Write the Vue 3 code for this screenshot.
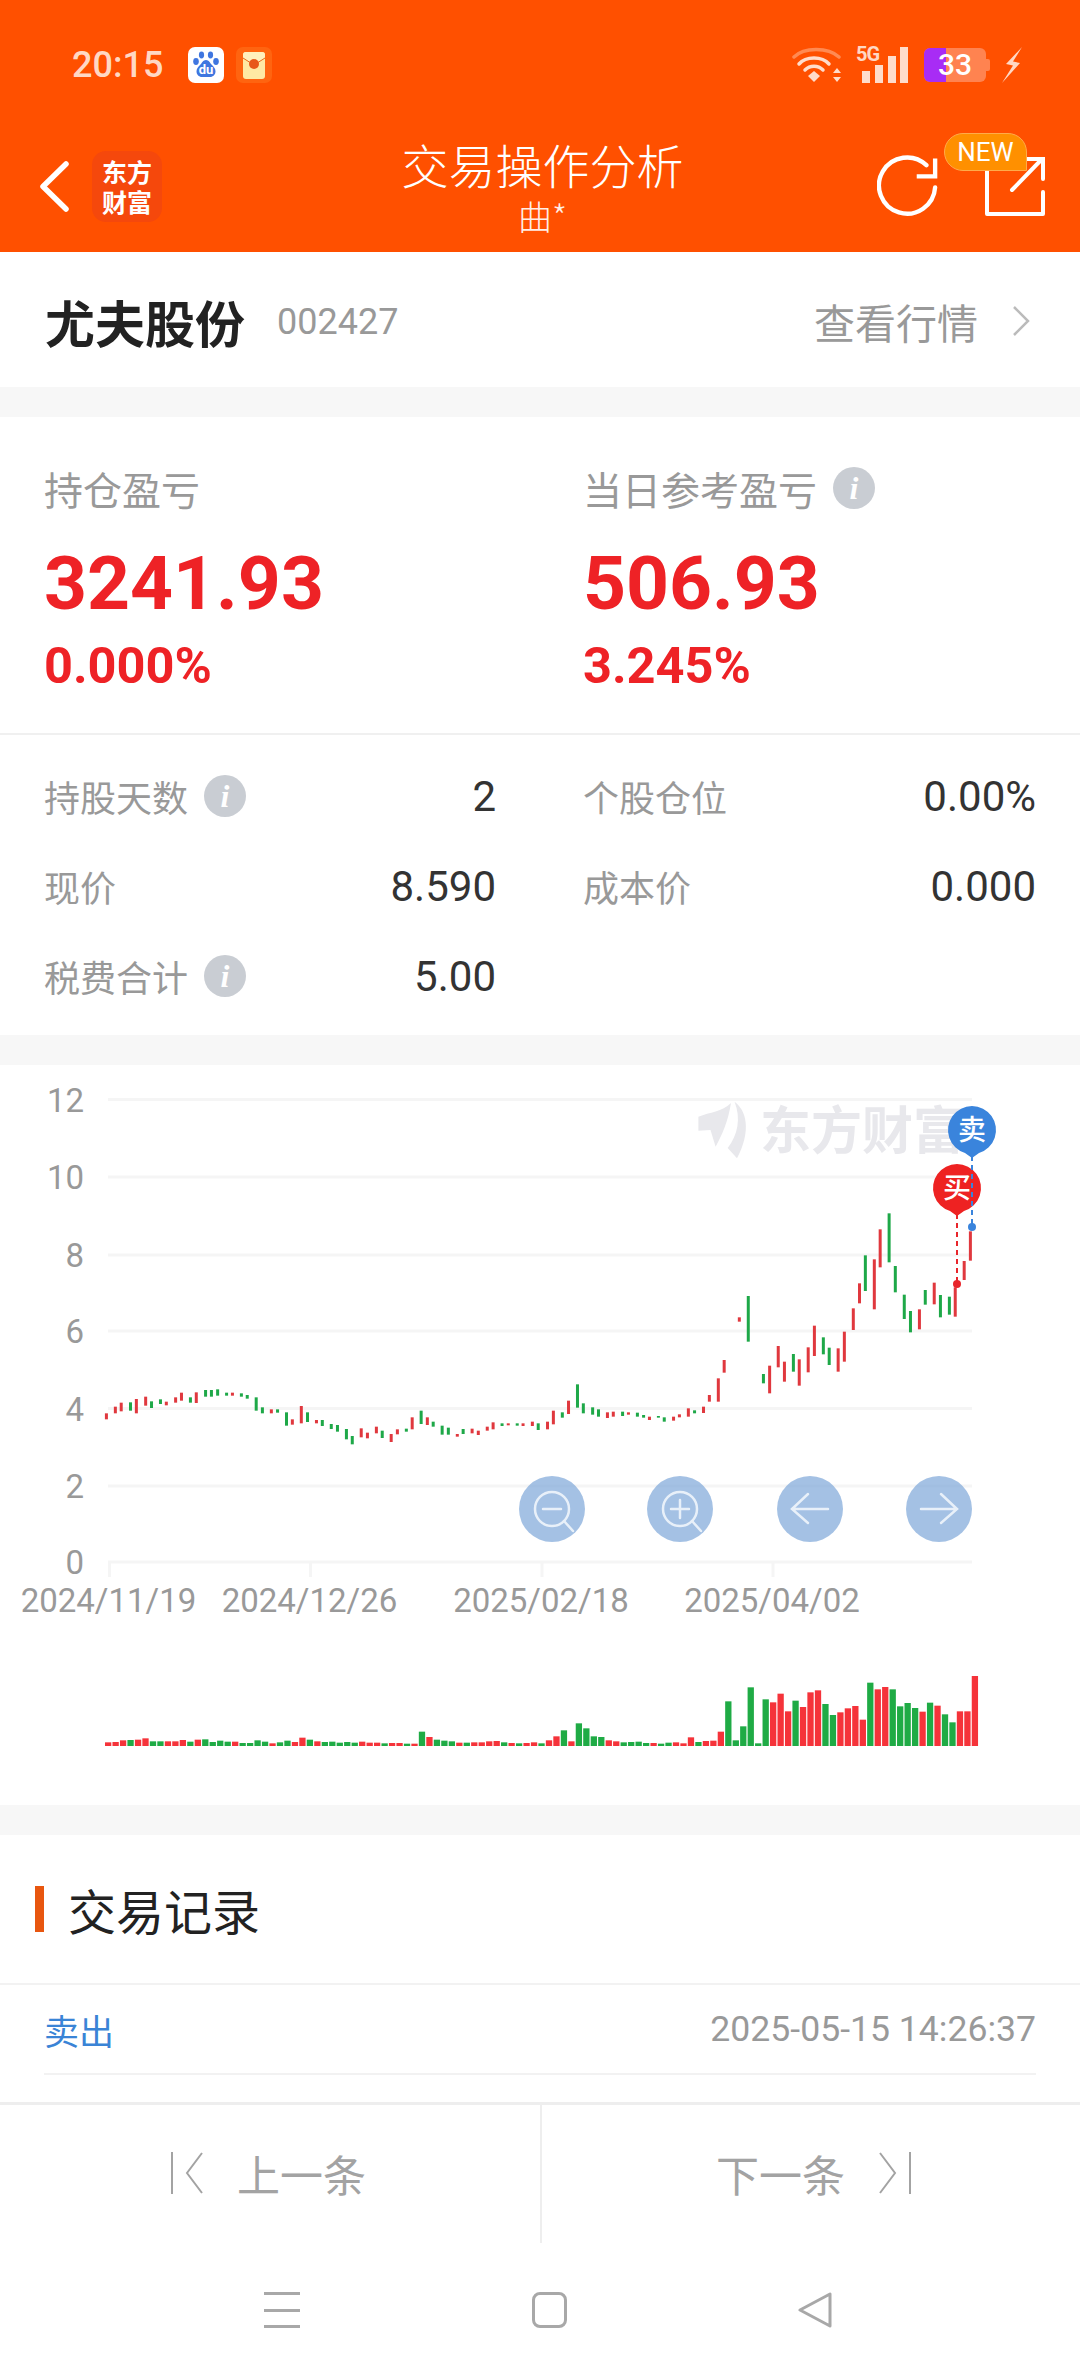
<template>
  <div class="page">
    <header class="top">
      <div class="status">
        <span class="time">20:15</span>
        <svg class="st-baidu" width="36" height="36" viewBox="0 0 36 36">
          <rect width="36" height="36" rx="7" fill="#fff" />
          <ellipse cx="13.500" cy="8" rx="2.600" ry="3.400" fill="#3f76e0" />
          <ellipse cx="22.500" cy="8" rx="2.600" ry="3.400" fill="#3f76e0" />
          <ellipse cx="8" cy="14.500" rx="2.800" ry="3.400" fill="#3f76e0" />
          <ellipse cx="28" cy="14.500" rx="2.800" ry="3.400" fill="#3f76e0" />
          <path d="M18 13c-3 0-4 3-6 5-2 2-3.500 3.500-3.500 6.500S11 30 14 30h8c3 0 5.500-2.500 5.500-5.500S26 20 24 18c-2-2-3-5-6-5z" fill="#3f76e0" />
          <text x="18" y="27" class="du">du</text>
        </svg>
        <svg class="st-packet" width="36" height="36" viewBox="0 0 36 36">
          <rect width="36" height="36" rx="7" fill="#ff6410" />
          <rect x="7" y="5" width="22" height="27" rx="3" fill="#ffe9a3" />
          <path d="M7 11l11 7 11-7V8a3 3 0 0 0-3-3H10a3 3 0 0 0-3 3z" fill="#fff0bd" />
          <path d="M7 11l11 7 11-7" fill="none" stroke="#e8691a" stroke-width="1" />
          <circle cx="18" cy="17" r="5" fill="#e8581a" />
        </svg>
        <span class="spacer"></span>
        <svg width="50" height="36" viewBox="0 0 50 36">
          <path d="M2 10C12 0 36 0 47 10" fill="none" stroke="#ff8a52" stroke-width="3.500" stroke-linecap="round" />
          <path d="M7 17C14 9 30 9 37 17" fill="none" stroke="#ffdccb" stroke-width="3.500" stroke-linecap="round" />
          <path d="M13 23C18 18 26 18 31 23" fill="none" stroke="#ffdccb" stroke-width="3.500" stroke-linecap="round" />
          <path d="M22 24l6 5-6 6-6-6z" fill="#ffdccb" />
          <path d="M45 21l4 5h-8zM45 35l4-5h-8z" fill="#ffdccb" />
        </svg>
        <div class="signal">
          <span class="five-g">5G</span>
          <i class="sig sig-1"></i>
          <i class="sig sig-2"></i>
          <i class="sig sig-3"></i>
          <i class="sig sig-4"></i>
        </div>
        <div class="battery">
          <span class="batt-fill"></span>
          <span class="batt-num">33</span>
          <span class="batt-cap"></span>
        </div>
        <svg class="bolt" width="21" height="36" viewBox="0 0 21 36">
          <path d="M20 0L4 17l7 1.500L0 36l18-20-7-1.500z" fill="#ffd8c4" />
        </svg>
      </div>

      <div class="nav">
        <div class="nav-left">
          <svg width="29" height="51" viewBox="0 0 29 51">
            <path d="M26 3L3 25.500 26 48" fill="none" stroke="#fff" stroke-width="5.500" stroke-linecap="round" stroke-linejoin="round" />
          </svg>
          <div class="logo"><span>东方</span><span>财富</span></div>
        </div>
        <div class="nav-title">
          <div class="title">交易操作分析</div>
          <div class="sub">曲*</div>
        </div>
        <div class="nav-right">
          <svg class="refresh" width="62" height="63" viewBox="0 0 64 64">
            <path d="M60 33A29 29 0 1 1 51 10" fill="none" stroke="#fff" stroke-width="4.500" stroke-linecap="round" />
            <path d="M41 21.500H60V3" fill="none" stroke="#fff" stroke-width="4.500" />
          </svg>
          <div class="share">
            <svg width="60" height="60" viewBox="0 0 60 60">
              <path d="M34 5H2V58H58V36" fill="none" stroke="#fff" stroke-width="4" stroke-linejoin="round" stroke-linecap="round" />
              <path d="M27 34L57 3M40 3H58V23" fill="none" stroke="#fff" stroke-width="4" stroke-linecap="round" />
            </svg>
            <span class="new">NEW</span>
          </div>
        </div>
      </div>
    </header>

    <section class="stock">
      <span class="stock-name">尤夫股份</span>
      <span class="stock-code">002427</span>
      <span class="spacer"></span>
      <span class="stock-link">查看行情</span>
      <svg width="18" height="32" viewBox="0 0 18 32">
        <path d="M2 2l14 14L2 30" fill="none" stroke="#bbb" stroke-width="2.500" />
      </svg>
    </section>

    <section class="summary">
      <div class="pnl">
        <div v-for="p in pnl" :key="p.label" class="pnl-col">
          <div class="label">
            {{ p.label }}
            <i v-if="p.info" class="info">i</i>
          </div>
          <div class="pnl-num">{{ p.value }}</div>
          <div class="pnl-pct">{{ p.pct }}</div>
        </div>
      </div>
      <div class="details">
        <div v-for="d in details" :key="d.label" class="detail">
          <span class="detail-label">{{ d.label }}<i v-if="d.info" class="info">i</i></span>
          <span class="detail-value">{{ d.value }}</span>
        </div>
      </div>
    </section>

    <section class="chart">
      <svg width="1080" height="740" viewBox="0 1065 1080 740">
        <line v-for="g in grid" :key="g.label" x1="108" x2="972" :y1="g.y" :y2="g.y" class="grid" />
        <text v-for="g in grid" :key="'t' + g.label" x="84" :y="g.y + 12" class="axis end">{{ g.label }}</text>
        <line v-for="t in ticks" :key="t.x" :x1="t.x" :x2="t.x" y1="1562" y2="1577" class="grid" />
        <text v-for="t in ticks" :key="t.label" :x="t.x - 1" y="1612" class="axis mid">{{ t.label }}</text>

        <g class="watermark">
          <path d="M734.600 1101.700C746 1110 752 1130 737 1158.300L727.700 1148C738 1135 741 1118 734.600 1101.700Z" />
          <path d="M731 1103C728 1122 722 1135 715.600 1146.700L710.500 1130 698.400 1130.700V1116.700C710 1112 722 1112 731 1103Z" />
          <text x="760" y="1149">东方财富</text>
        </g>

        <rect
          v-for="c in candles"
          :key="c.x"
          :x="c.x"
          :y="c.y"
          width="3"
          :height="c.h"
          :fill="c.fill"
        />
        <rect
          v-for="v in volumes"
          :key="v.x"
          :x="v.x"
          :y="v.y"
          width="6.300"
          :height="v.h"
          :fill="v.fill"
        />

        <g v-for="b in zoomBtns" :key="b" :transform="`translate(${b} 1509)`">
          <circle r="33" class="btn" />
        </g>
        <g class="btn-icon">
          <circle cx="552" cy="1509" r="17" />
          <path d="M564 1521l9 10M543 1509h18" />
          <circle cx="680" cy="1509" r="17" />
          <path d="M692 1521l9 10M671 1509h18M680 1500v18" />
          <path d="M828 1509h-36M808 1494l-16 15 16 14" />
          <path d="M921 1509h36M941 1494l16 15-16 14" />
        </g>

        <line x1="957" x2="957" y1="1214" y2="1284" class="dash-red" />
        <circle cx="957" cy="1284" r="4" fill="#e8252b" />
        <path d="M957 1216l-7-5a24 24 0 1 1 14 0z" fill="#ee2222" />
        <text x="957" y="1198" class="pin">买</text>
        <line x1="972" x2="972" y1="1156" y2="1227" class="dash-blue" />
        <circle cx="972" cy="1227" r="4" fill="#3a84dc" />
        <path d="M972 1158l-7-5a24 24 0 1 1 14 0z" fill="#3a84dc" />
        <text x="972" y="1140" class="pin">卖</text>
      </svg>
    </section>

    <section class="records">
      <div class="records-head"><i class="mark"></i>交易记录</div>
      <div class="record">
        <span class="record-type">卖出</span>
        <span class="record-time">2025-05-15 14:26:37</span>
      </div>
    </section>

    <div class="pager">
      <div class="pager-btn">
        <svg width="32" height="42" viewBox="0 0 32 42">
          <path d="M1 0v42M31 1L16 21l15 20" fill="none" stroke="#a3a3a3" stroke-width="2" />
        </svg>
        <span>上一条</span>
      </div>
      <div class="pager-btn right">
        <span>下一条</span>
        <svg width="32" height="42" viewBox="0 0 32 42">
          <path d="M31 0v42M1 1l15 20L1 41" fill="none" stroke="#a3a3a3" stroke-width="2" />
        </svg>
      </div>
    </div>

    <footer class="sysnav">
      <div class="menu"><i></i><i></i><i></i></div>
      <div class="home"></div>
      <svg width="35" height="36" viewBox="0 0 35 36">
        <path d="M32 2v32L2 18z" fill="none" stroke="#a8a8a8" stroke-width="3" stroke-linejoin="round" />
      </svg>
    </footer>
  </div>
</template>

<script setup>
const pnl = [
  { label: "持仓盈亏", value: "3241.93", pct: "0.000%" },
  { label: "当日参考盈亏", value: "506.93", pct: "3.245%", info: true },
];

const details = [
  { label: "持股天数", value: "2", info: true },
  { label: "个股仓位", value: "0.00%" },
  { label: "现价", value: "8.590" },
  { label: "成本价", value: "0.000" },
  { label: "税费合计", value: "5.00", info: true },
];

const grid = [
  { label: "12", y: 1099.5 },
  { label: "10", y: 1177 },
  { label: "8", y: 1255 },
  { label: "6", y: 1331 },
  { label: "4", y: 1408.5 },
  { label: "2", y: 1486 },
  { label: "0", y: 1562 },
];

const ticks = [
  { x: 109.5, label: "2024/11/19" },
  { x: 310.5, label: "2024/12/26" },
  { x: 542, label: "2025/02/18" },
  { x: 773, label: "2025/04/02" },
];

const zoomBtns = [552, 680, 810, 939];

const RED = "#e0383e";
const GREEN = "#1ea848";

// x, top, bottom, 1 = up; x is at 2.904 per px, y at 3 per px from 1380
const rawCandles = [
  [309,100,118,1],[335,80,100,1],[352,68,94,1],[379,67,92,0],[396,57,100,1],[423,50,77,1],[440,64,84,0],[466,58,72,0],
  [483,65,76,1],[510,52,68,1],[527,38,62,1],[553,52,68,0],[570,37,69,1],[597,30,50,0],[614,30,50,0],[632,28,47,0],
  [658,38,47,0],[675,38,47,1],[701,40,50,0],[718,45,56,0],[744,52,92,0],[762,82,100,0],[788,88,100,1],[806,88,98,0],
  [832,97,137,0],[849,118,134,1],[875,78,130,1],[893,97,126,0],[919,120,130,1],[936,120,138,0],[962,132,147,0],
  [980,135,155,0],[1006,147,178,0],[1023,168,193,0],[1049,145,172,1],[1067,158,175,1],[1093,140,160,1],[1110,152,174,0],
  [1136,162,186,1],[1154,148,163,1],[1180,146,155,0],[1197,112,148,1],[1223,92,132,0],[1241,112,135,1],[1258,125,140,0],
  [1284,137,164,0],[1302,143,164,0],[1328,162,170,1],[1345,147,162,0],[1371,146,160,1],[1389,152,165,1],[1415,140,152,1],
  [1432,127,148,1],[1458,130,138,0],[1476,130,136,1],[1502,130,137,0],[1519,130,138,1],[1546,125,138,1],[1563,130,150,0],
  [1590,125,148,1],[1607,92,133,1],[1633,97,113,0],[1651,62,102,1],[1677,13,83,0],[1694,70,100,0],[1721,82,104,0],
  [1738,88,110,0],[1764,97,114,1],[1781,95,110,1],[1808,95,108,0],[1825,97,104,1],[1851,98,110,0],[1869,105,113,0],
  [1886,110,120,1],[1912,108,113,0],[1929,112,125,0],[1956,110,122,1],[1973,103,112,1],[1999,85,110,1],[2017,91,100,0],
  [2043,80,99,1],[2060,45,65,1],[2086,-5,65,1],[2103,-60,-22,1],[2147,-188,-175,1],[2173,-252,-115,0],[2217,-18,10,0],
  [2235,-43,40,1],[2260,-102,-38,1],[2278,-55,5,1],[2304,-78,-25,0],[2321,-62,17,1],[2347,-98,-23,1],[2365,-163,-72,1],
  [2391,-128,-77,0],[2408,-97,-45,0],[2434,-95,-25,1],[2452,-145,-55,1],[2478,-215,-150,1],[2496,-290,-230,1],
  [2513,-374,-267,0],[2539,-362,-212,1],[2556,-452,-338,1],[2582,-500,-353,0],[2600,-342,-263,0],[2626,-256,-183,0],
  [2644,-207,-143,0],[2670,-212,-152,1],[2687,-270,-226,0],[2713,-292,-227,1],[2731,-255,-188,0],[2757,-250,-196,0],
  [2774,-278,-190,1],[2800,-357,-300,1],[2818,-446,-358,1],
];

const candles = rawCandles.map(([x, top, bot, up]) => ({
  x: x / 2.904 - 1.5,
  y: 1380 + top / 3,
  h: (bot - top) / 3,
  fill: up ? RED : GREEN,
}));

const volTops = [
  1087,1086,1081,1080,1079,1075,1084,1084,1084,1084,1080,1085,1079,1078,1086,1082,1085,1085,1089,1089,
  1081,1085,1090,1087,1082,1086,1073,1079,1084,1086,1085,1088,1086,1088,1085,1088,1088,1090,1089,1089,
  1091,1091,1055,1071,1079,1082,1084,1088,1088,1087,1087,1084,1083,1087,1089,1090,1089,1087,
  1090,1081,1069,1051,1084,1030,1045,1069,1071,1081,1084,1087,1086,1085,1089,1089,1091,1088,1087,1090,
  1072,1086,1083,1082,1055,964,1081,1039,922,1090,958,967,941,994,962,981,937,931,972,1005,997,985,978,
  1019,908,928,921,928,979,969,984,995,968,977,1003,1027,994,994,888,
];
// one letter per bar, same order as volTops
const volColors =
  "rrrgrrggrrrgrggggrggggrggrrgrggggg" + "rrrgrrgrgrgggrgrrrrgrgrr" +
  "grrgrggggrrggggrggrrrgrrrgggggg" + "rrrgrrrggrrrrgrrggggrgrggrrr";

const volumes = volTops.map((top, i) => ({
  x: 105 + i * 7.472,
  y: 1380 + top / 3,
  h: (1098 - top) / 3,
  fill: volColors[i] === "g" ? "#1fab45" : "#f5333a",
}));
</script>

<style>
html, body { margin: 0; background: #fff; }
</style>

<style scoped>
.page {
  width: 1080px; height: 2376px; overflow: hidden; background: #f7f7f7;
  display: flex; flex-direction: column;
  font-family: Roboto, "Noto Sans CJK SC", sans-serif;
}
.spacer { flex: 1; }

.top { height: 252px; background: #ff5000; box-sizing: border-box; padding-top: 47px; }
.status { height: 36px; display: flex; align-items: center; padding: 0 57px 0 72px; }
.time { width: 116px; font-size: 36px; font-weight: 500; color: #ffd8c4; line-height: 36px; }
.du { font: 700 13px Roboto, sans-serif; fill: #fff; text-anchor: middle; }
.st-packet { margin-left: 12px; }
.signal { width: 45px; height: 36px; margin-left: 20px; position: relative; }
.five-g { position: absolute; left: -6px; top: -3px; font-size: 20px; font-weight: 700; color: #ffd8c4; line-height: 20px; letter-spacing: -1px; }
.sig { position: absolute; bottom: 0; width: 7.500px; background: #ffdccb; }
.sig-1 { left: 0; height: 12px; }
.sig-2 { left: 13px; height: 18px; }
.sig-3 { left: 26px; height: 27px; }
.sig-4 { left: 38px; height: 36px; }
.battery {
  width: 62px; height: 34px; margin-left: 17px; position: relative;
  background: #ff8350; border-radius: 6px;
  display: flex; align-items: center; justify-content: center;
}
.batt-fill { position: absolute; left: 0; top: 0; bottom: 0; width: 22px; background: #a82cf5; border-radius: 6px 0 0 6px; }
.batt-num { position: relative; font-size: 30px; font-weight: 500; color: #fff; line-height: 34px; }
.batt-cap { position: absolute; right: -4px; top: 11px; width: 4px; height: 12px; background: #ff8350; border-radius: 0 2px 2px 0; }
.bolt { margin-left: 16px; }

.nav { height: 88px; margin-top: 59px; padding: 0 35px 0 40px; display: grid; grid-template-columns: 1fr auto 1fr; grid-template-rows: 88px; align-items: center; }
.nav-left { display: flex; align-items: center; gap: 23px; }
.logo {
  width: 70px; height: 71px; background: #f5480c; border-radius: 14px;
  display: flex; flex-direction: column; align-items: center; justify-content: center;
  color: #fff; font-size: 25px; font-weight: 700; line-height: 30px;
  font-family: "Noto Sans CJK SC", sans-serif;
}
.nav-title { text-align: center; color: #fff; font-family: "Noto Sans CJK SC", sans-serif; margin-top: -2.500px; }
.title { font-size: 47px; line-height: 56px; font-weight: 300; }
.sub { font-size: 34px; line-height: 36px; margin-top: 5.500px; font-weight: 300; color: #ffeee6; }
.nav-right { display: flex; justify-content: flex-end; align-items: center; gap: 46px; }
.share { width: 60px; height: 60px; position: relative; }
.share svg { display: block; }
.new {
  position: absolute; left: -41px; top: -23px; width: 83px; height: 38px;
  background: #ff9000; border-radius: 19px 19px 0 19px; border: 1px solid #ffab4a; box-sizing: border-box;
  font-size: 26px; line-height: 36px; color: #fff; text-align: center;
}

.stock { height: 135px; box-sizing: border-box; background: #fff; display: flex; align-items: center; padding: 2px 50px 0 45px; margin-bottom: 30px; }
.stock-name { font-size: 50px; font-weight: 700; color: #222; font-family: "Noto Sans CJK SC", sans-serif; }
.stock-code { font-size: 36px; color: #999; margin-left: 32px; margin-top: 2px; }
.stock-link { font-size: 41px; color: #999; margin-right: 34px; font-family: "Noto Sans CJK SC", sans-serif; }

.summary { height: 618px; margin-bottom: 30px; background: #fff; }
.pnl { height: 318px; box-sizing: border-box; padding: 46px 44px 0; display: grid; grid-template-columns: 539px 1fr; border-bottom: 2px solid #f0f0f0; }
.label { height: 50px; display: flex; align-items: center; gap: 16px; font-size: 39px; color: #999; }
.info {
  display: inline-block; width: 42px; height: 42px; border-radius: 50%; background: #c9cdd3;
  color: #fff; font: italic 700 32px/42px "Liberation Serif", serif; text-align: center;
}
.pnl-num { margin-top: 32px; height: 76px; font-size: 75px; line-height: 76px; font-weight: 700; color: #ee2226; }
.pnl-pct { margin-top: 21px; height: 48px; font-size: 50.500px; line-height: 48px; font-weight: 700; color: #ee2226; }
.details { padding: 16px 44px 0; display: grid; grid-template-columns: 452px 453px; column-gap: 87px; grid-auto-rows: 90px; }
.detail { display: flex; align-items: center; justify-content: space-between; }
.detail-label { display: flex; align-items: center; gap: 16px; font-size: 36px; color: #999; }
.detail-value { font-size: 42px; color: #333; }

.chart { height: 740px; margin-bottom: 30px; background: #fff; }
.chart svg { display: block; }
.grid { stroke: #f5f5f5; stroke-width: 3; }
.axis { font-size: 33px; fill: #999; }
.end { text-anchor: end; }
.mid { text-anchor: middle; }
.watermark { fill: #e8e8ec; }
.watermark text { font: 700 51px "Noto Sans CJK SC", sans-serif; }
.btn { fill: #7ea7d8; opacity: 0.7; }
.btn-icon { fill: none; stroke: #e8f0f9; stroke-width: 2.500; stroke-linecap: round; }
.dash-red { stroke: #e8252b; stroke-width: 2; stroke-dasharray: 5 4; }
.dash-blue { stroke: #3a84dc; stroke-width: 2; stroke-dasharray: 5 4; }
.pin { font: 500 28px "Noto Sans CJK SC", sans-serif; fill: #fff; text-anchor: middle; }

.records { height: 267px; background: #fff; }
.records-head {
  height: 150px; box-sizing: border-box; display: flex; align-items: center;
  padding-left: 35px; border-bottom: 2px solid #f2f2f2;
  font-size: 48px; color: #222; font-family: "Noto Sans CJK SC", sans-serif;
}
.mark { width: 9px; height: 46px; background: #e8560f; margin-right: 24px; }
.record {
  height: 90px; margin: 0 44px; box-sizing: border-box; border-bottom: 2px solid #f2f2f2;
  display: flex; align-items: center; justify-content: space-between;
}
.record-type { font-size: 35px; color: #3a84d6; font-family: "Noto Sans CJK SC", sans-serif; }
.record-time { font-size: 35.600px; color: #999; }

.pager { height: 141px; background: #fff; border-top: 3px solid #eee; display: flex; box-sizing: border-box; }
.pager-btn {
  width: 540px; box-sizing: border-box; display: flex; align-items: center; gap: 34px; padding-left: 171px; padding-bottom: 2px;
  font-size: 43px; color: #a3a3a3; font-family: "Noto Sans CJK SC", sans-serif;
}
.pager-btn.right { border-left: 2px solid #eee; padding-left: 174px; }

.sysnav { flex: 1; background: #fff; display: flex; align-items: flex-start; padding: 49px 247px 0 264px; justify-content: space-between; }
.menu { width: 36px; height: 36px; display: flex; flex-direction: column; justify-content: space-between; }
.menu i { display: block; height: 3px; background: #a8a8a8; }
.home { width: 35px; height: 36px; box-sizing: border-box; border: 3px solid #a8a8a8; border-radius: 8px; }
</style>
